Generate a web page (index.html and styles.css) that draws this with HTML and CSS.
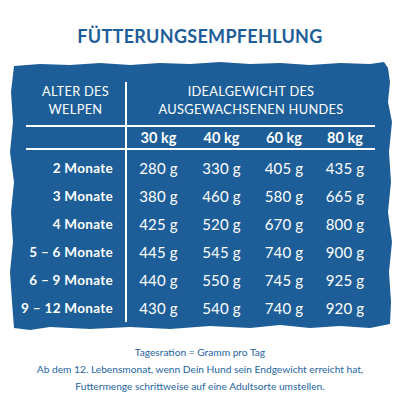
FILE: index.html
```html
<!DOCTYPE html>
<html lang="de">
<head>
    <meta charset="UTF-8">
    <meta name="viewport" content="width=device-width, initial-scale=1.0">
    <title>Fütterungsempfehlung</title>
    <link rel="stylesheet" href="styles.css">
</head>
<body>
    <h1 class="title">FÜTTERUNGSEMPFEHLUNG</h1>
    <div class="panel">
        <div class="grid">
            <div class="cell head head-age">ALTER DES<br>WELPEN</div>
            <div class="cell head head-weight">IDEALGEWICHT DES<br>AUSGEWACHSENEN HUNDES</div>

            <div class="cell kg label"></div>
            <div class="cell kg">30 kg</div>
            <div class="cell kg">40 kg</div>
            <div class="cell kg">60 kg</div>
            <div class="cell kg">80 kg</div>

            <div class="cell label first">2 Monate</div>
            <div class="cell value first">280 g</div>
            <div class="cell value first">330 g</div>
            <div class="cell value first">405 g</div>
            <div class="cell value first">435 g</div>

            <div class="cell label">3 Monate</div>
            <div class="cell value">380 g</div>
            <div class="cell value">460 g</div>
            <div class="cell value">580 g</div>
            <div class="cell value">665 g</div>

            <div class="cell label">4 Monate</div>
            <div class="cell value">425 g</div>
            <div class="cell value">520 g</div>
            <div class="cell value">670 g</div>
            <div class="cell value">800 g</div>

            <div class="cell label">5 – 6 Monate</div>
            <div class="cell value">445 g</div>
            <div class="cell value">545 g</div>
            <div class="cell value">740 g</div>
            <div class="cell value">900 g</div>

            <div class="cell label">6 – 9 Monate</div>
            <div class="cell value">440 g</div>
            <div class="cell value">550 g</div>
            <div class="cell value">745 g</div>
            <div class="cell value">925 g</div>

            <div class="cell label">9 – 12 Monate</div>
            <div class="cell value">430 g</div>
            <div class="cell value">540 g</div>
            <div class="cell value">740 g</div>
            <div class="cell value">920 g</div>
        </div>
    </div>
    <p class="note">
        Tagesration = Gramm pro Tag<br>
        Ab dem 12. Lebensmonat, wenn Dein Hund sein Endgewicht erreicht hat,<br>
        Futtermenge schrittweise auf eine Adultsorte umstellen.
    </p>
</body>
</html>
```

FILE: styles.css
```css
body {
    margin: 0;
    padding: 0;
    background: #fff;
    font-family: Lato, "Open Sans", sans-serif;
    color: #1d5e98;
}
.title {
    margin: 0;
    padding-top: 25px;
    height: 37px;
    text-align: center;
    font-size: 18px;
    font-weight: 700;
    letter-spacing: 0.3px;
    line-height: 22px;
}
.panel {
    margin-left: 10px;
    width: 382px;
    height: 268px;
    box-sizing: border-box;
    padding: 20px 0 0 16px;
    background: #1d5e98;
    color: #fff;
    clip-path: polygon(4px 4px, 30px 2px, 60px 3px, 90px 1px, 120px 3px, 150px 1px, 180px 2px, 210px 0, 240px 2px, 270px 1px, 300px 3px, 330px 1px, 360px 2px, 374px 0, 378px 6px,
        380px 20px, 378px 40px, 382px 60px, 379px 90px, 381px 120px, 378px 150px, 382px 180px, 379px 210px, 381px 240px, 380px 262px,
        360px 266px, 330px 264px, 300px 266px, 270px 263px, 240px 266px, 200px 264px, 160px 267px, 120px 265px, 80px 267px, 40px 265px, 20px 268px, 4px 266px,
        2px 240px, 0 210px, 3px 180px, 1px 150px, 4px 120px, 0 90px, 3px 60px, 1px 30px);
}
.grid {
    display: grid;
    grid-template-columns: 101px 63px 63px 62px 60px;
    width: 349px;
}
.cell {
    display: flex;
    align-items: center;
    justify-content: center;
    height: 28px;
    white-space: nowrap;
}
.head {
    height: 43px;
    align-items: flex-start;
    text-align: center;
    font-size: 12.8px;
    line-height: 18px;
    border-bottom: 2px solid #fff;
    letter-spacing: 0.3px;
}
.head-age {
    border-right: 2px solid #fff;
}
.head-weight {
    grid-column: span 4;
}
.kg {
    height: 21px;
    font-size: 14.5px;
    font-weight: 700;
    border-bottom: 2px solid #fff;
}
.label {
    justify-content: flex-end;
    padding-right: 12px;
    border-right: 2px solid #fff;
    font-size: 13.5px;
    font-weight: 700;
    letter-spacing: 0.3px;
}
.value {
    font-size: 15px;
    letter-spacing: 0.2px;
}
.first {
    height: 32px;
    padding-top: 4px;
    box-sizing: border-box;
}
.note {
    margin: 14px 0 0;
    text-align: center;
    font-size: 10.2px;
    line-height: 17px;
    color: #2565a0;
}
```
